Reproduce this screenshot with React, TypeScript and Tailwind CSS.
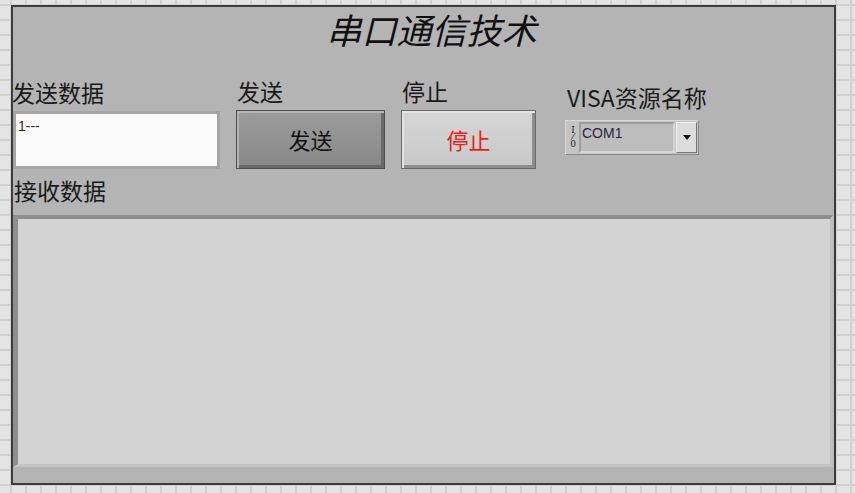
import React from "react";

const cjk = "font-['Noto_Sans_CJK_SC','Noto_Sans',sans-serif]";

export default function App() {
  return (
    <div className="w-[855px] h-[493px] overflow-hidden bg-[#e4e4e4] bg-[linear-gradient(to_right,#d0d0d0_2px,transparent_2px),linear-gradient(to_bottom,#d0d0d0_2px,transparent_2px)] bg-[size:15px_15px] bg-[position:10px_4px] pt-[5px] pl-[11px]">
      <div className={`w-[825px] h-[480px] border-2 border-[#3c3c3c] bg-[#b4b4b4] flex flex-col ${cjk} text-[#1a1a1a]`}>
        {/* Title */}
        <div className="h-[44px] leading-[44px] text-[35px] italic text-center pl-[16px] text-[#111]">
          串口通信技术
        </div>

        {/* Controls row */}
        <div className="flex mt-[29px]">
          {/* 发送数据 */}
          <div className="flex flex-col w-[208px] -ml-[1px]">
            <div className="h-[28px] leading-[24px] text-[23px] whitespace-nowrap">发送数据</div>
            <div className="mt-[3px] ml-[1px] h-[58px] border-[3px] border-[#a4a4a4] bg-[#fafafa] px-[2px] pt-[4px] text-[14px] leading-[16px] font-['Liberation_Sans',sans-serif] text-[#3a2a10]">
              1---
            </div>
          </div>

          {/* 发送 */}
          <div className="flex flex-col ml-[16px] w-[149px]">
            <div className="h-[28px] leading-[24px] text-[23px] pl-[1px] -mt-[1px]">发送</div>
            <button className="mt-[3px] h-[59px] border border-[#4e4e4e] bg-[linear-gradient(to_bottom,#9c9c9c,#888888)] shadow-[inset_2px_2px_0_#b4b4b4,inset_-3px_-3px_0_#6a6a6a] text-[22px] text-[#111] flex items-center justify-center">
              发送
            </button>
          </div>

          {/* 停止 */}
          <div className="flex flex-col ml-[16px] w-[135px]">
            <div className="h-[28px] leading-[24px] text-[23px] pl-[1px] -mt-[1px]">停止</div>
            <button className="mt-[3px] h-[59px] border border-[#6a6a6a] bg-[linear-gradient(to_bottom,#d6d6d6,#c8c8c8)] shadow-[inset_2px_2px_0_#e4e4e4,inset_-3px_-3px_0_#8e8e8e] text-[22px] text-[#ee1c1c] flex items-center justify-center">
              停止
            </button>
          </div>

          {/* VISA */}
          <div className="flex flex-col ml-[29px]">
            <div className="h-[28px] leading-[28px] text-[23px] pl-[2px] mt-[3px] whitespace-nowrap">VISA资源名称</div>
            <div className="mt-[9px] w-[134px] h-[35px] bg-[#c4c4c4] border border-[#d8d8d8] border-r-[#8a8a8a] border-b-[#8a8a8a] flex items-stretch p-[1px]">
              <div className="w-[12px] flex flex-col items-center justify-center text-[9px] leading-[9px] font-['DejaVu_Serif',serif] text-[#222]">
                <span>I</span>
                <span className="-mt-[2px]">⁄</span>
                <span className="-mt-[2px]">0</span>
              </div>
              <div className="flex-1 bg-[#bdbdbd] border-2 border-[#9e9e9e] border-r-[#d6d6d6] border-b-[#d6d6d6] text-[14px] leading-[16px] pl-[1px] pt-[1px] font-['Liberation_Sans',sans-serif] text-[#2a2440]">
                COM1
              </div>
              <div className="w-[21px] bg-[#dcdcdc] border border-[#f2f2f2] border-r-[#777] border-b-[#777] flex items-center justify-center ml-[1px]">
                <svg width="8" height="5" viewBox="0 0 8 5"><path d="M0 0H8L4 5Z" fill="#111" /></svg>
              </div>
            </div>
          </div>
        </div>

        {/* 接收数据 */}
        <div className="mt-[10px] h-[28px] leading-[22px] text-[23px] pl-[1px]">接收数据</div>
        <div className="mt-[8px] ml-0 w-[820px] h-[252px] bg-[#d3d3d3] border-t-[4px] border-l-[5px] border-t-[#8e8e8e] border-l-[#8e8e8e] border-r-[3px] border-r-[#c0c0c0] border-b-[3px] border-b-[#c4c4c4]"></div>
      </div>
    </div>
  );
}
